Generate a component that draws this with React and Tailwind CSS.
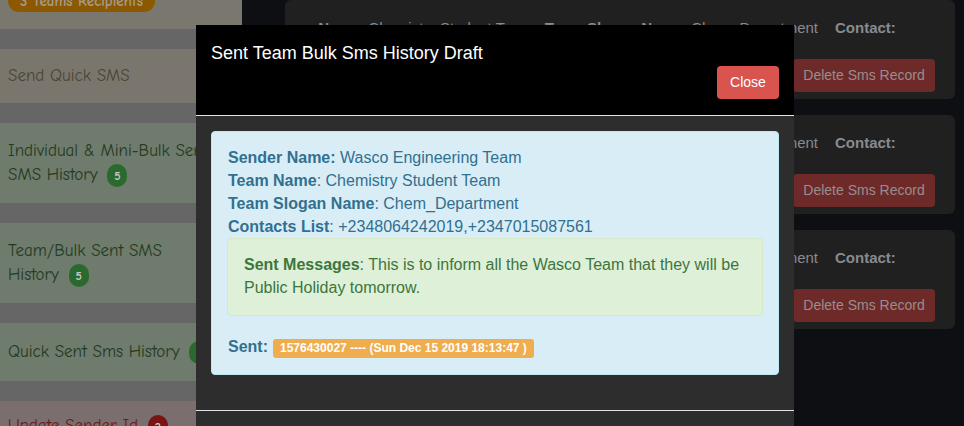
import React from 'react';

const comic = { fontFamily: '"Comic Sans MS", "Comic Neue", cursive' };

function SideCard({ bg, color, h, children }) {
    return (
        <div className={`${bg} ${color} ${h} shrink-0 flex items-center pl-2 pr-[22px] text-[17px] leading-[24px] overflow-hidden`}>
            <div>{children}</div>
        </div>
    );
}

function Badge({ bg, children }) {
    return (
        <span className={`${bg} inline-flex items-center justify-center w-[20px] h-[23px] rounded-full text-[12px] font-bold text-[#c8c8c8] align-middle ml-1`}>
            {children}
        </span>
    );
}

function RecordCard() {
    return (
        <div className="shrink-0 bg-[#202020] rounded-md h-[99px] pt-[18px] pr-[20px] pl-[12px]">
            <div className="flex items-center h-[20px] whitespace-nowrap text-[15px] text-[#878a8f]">
                <div className="w-[521px] overflow-hidden flex justify-end">
                    <span className="shrink-0">
                        <b>Team Name:</b> Chemistry Student Team &nbsp; <b>Team Slogan Name:</b> Chem_Department
                    </span>
                </div>
                <b className="ml-[17px]">Contact:</b>
            </div>
            <div className="flex justify-end mt-[21px]">
                <button className="w-[142px] h-[33px] rounded bg-[#6d2a29] text-[#9a8d8d] text-[14px]">
                    Delete Sms Record
                </button>
            </div>
        </div>
    );
}

export default function App() {
    return (
        <div className="relative w-[964px] h-[426px] overflow-hidden flex bg-[#0e0f13]" style={{ fontFamily: '"Liberation Sans", Arial, sans-serif' }}>
            <aside className="w-[242px] shrink-0 bg-[#666666] flex flex-col gap-[20px]" style={comic}>
                <div className="shrink-0 bg-[#7a776f] h-[29px] px-2 overflow-hidden">
                    <div className="-mt-[10px] w-fit px-[12px] h-[22px] leading-[22px] rounded-full bg-[#8c5800] text-[#a39d8c] text-[15px] font-bold">
                        3 Teams Recipients
                    </div>
                </div>
                <SideCard bg="bg-[#7a766e]" color="text-[#4c4535]" h="h-[54px]">Send Quick SMS</SideCard>
                <SideCard bg="bg-[#6f7b6c]" color="text-[#233a23]" h="h-[80px]">
                    Individual &amp; Mini-Bulk Sent SMS History <Badge bg="bg-[#2a6a2e]">5</Badge>
                </SideCard>
                <SideCard bg="bg-[#6f7b6c]" color="text-[#233a23]" h="h-[80px]">
                    Team/Bulk Sent SMS<br />History <Badge bg="bg-[#2a6a2e]">5</Badge>
                </SideCard>
                <SideCard bg="bg-[#6f7b6c]" color="text-[#233a23]" h="h-[58px]">
                    <span className="whitespace-nowrap">Quick Sent Sms History <Badge bg="bg-[#2a6a2e]">5</Badge></span>
                </SideCard>
                <div className="shrink-0 bg-[#7a6e6e] h-[60px] px-2 pt-[12px] text-[17px] text-[#6b1a1a] whitespace-nowrap">
                    Update Sender Id <Badge bg="bg-[#7a1414]">2</Badge>
                </div>
            </aside>

            <main className="flex-1 pl-[43px] pr-[9px] flex flex-col gap-[16px]">
                <RecordCard />
                <RecordCard />
                <RecordCard />
            </main>

            <div className="absolute left-[196px] top-[25px] w-[598px] h-[420px] bg-[#2d2d2d]">
                <div className="bg-black px-[15px] pt-[15px] pb-[16px] border-b border-[#e5e5e5]">
                    <h4 className="text-white text-[18px] leading-[26px]">Sent Team Bulk Sms History Draft</h4>
                    <div className="flex justify-end">
                        <button className="w-[62px] h-[33px] rounded bg-[#d9534f] text-white text-[14px]">Close</button>
                    </div>
                </div>
                <div className="p-[15px] border-b border-[#e5e5e5]">
                    <div className="bg-[#d9edf7] border border-[#bce8f1] rounded text-[#31708f] text-[16px] leading-[22.86px] px-[16px] py-[15px] mb-[20px]">
                        <div><b>Sender Name:</b> Wasco Engineering Team</div>
                        <div><b>Team Name</b>: Chemistry Student Team</div>
                        <div><b>Team Slogan Name</b>: Chem_Department</div>
                        <div><b>Contacts List</b>: +2348064242019,+2347015087561</div>
                        <div className="bg-[#dff0d8] border border-[#d6e9c6] rounded text-[#3c763d] p-[15px] pl-[16px] mb-[20px] -mx-px">
                            <b>Sent Messages</b>: This is to inform all the Wasco Team that they will be Public Holiday tomorrow.
                        </div>
                        <div className="flex items-center gap-[5px]">
                            <b>Sent:</b>
                            <span className="mt-[2px] bg-[#f0ad4e] text-white text-[12px] font-bold leading-[19px] px-[7px] rounded-[3px]">
                                1576430027 ---- (Sun Dec 15 2019 18:13:47 )
                            </span>
                        </div>
                    </div>
                </div>
            </div>
        </div>
    );
}
